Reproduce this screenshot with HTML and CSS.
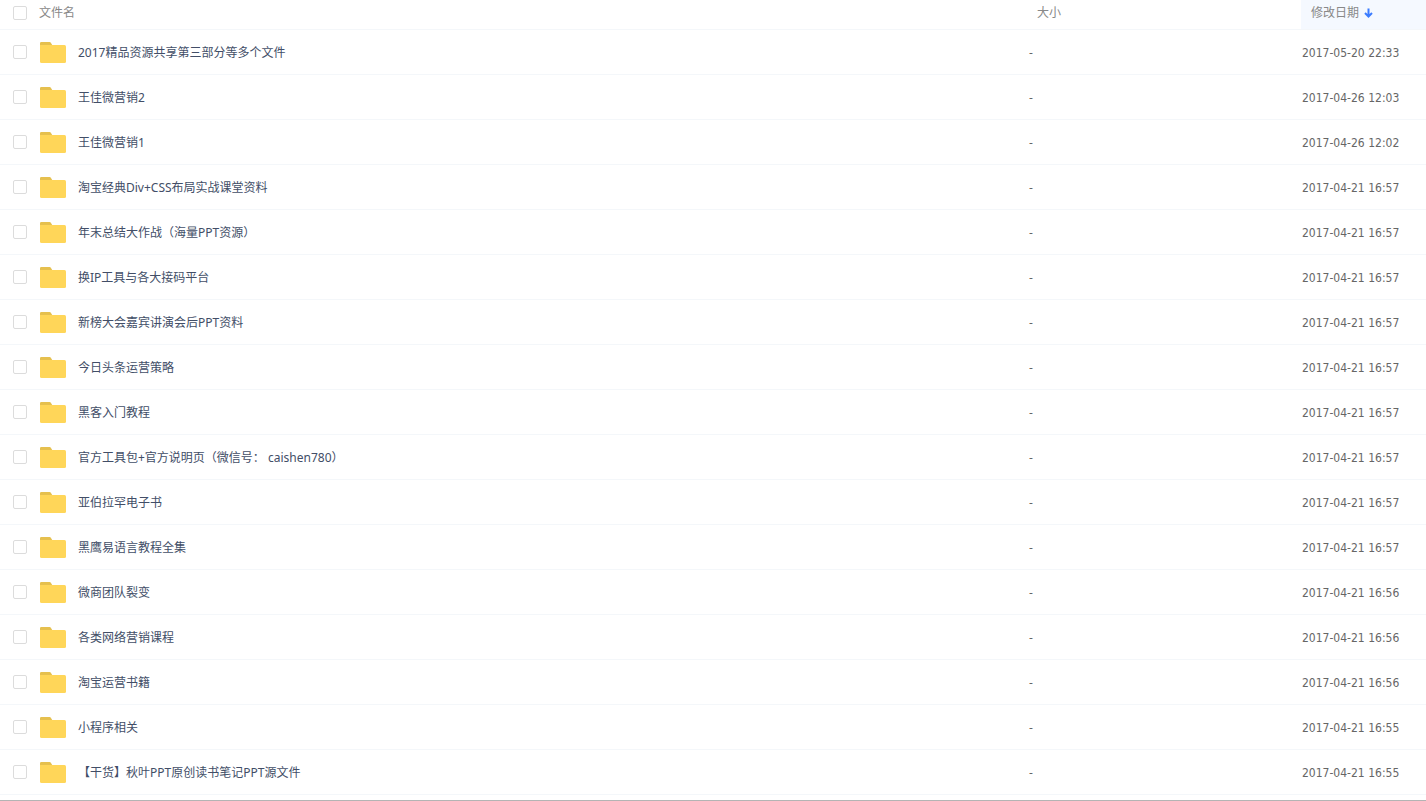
FILE: index.html
```html
<!DOCTYPE html>
<html lang="zh-Hans-CN">
<head>
    <meta charset="UTF-8">
    <title>文件列表</title>
    <link rel="stylesheet" href="styles.css">
</head>
<body>

    <!--文件夹图标-->
    <svg class="sprite" width="0" height="0" aria-hidden="true">
        <symbol id="folder" viewBox="0 0 26 22">
            <path fill="#e6c04e" d="M0 6V1.2Q0 0 1.2 0H9.6Q10.5 0 11 .9L12.5 3.5V6Z"/>
            <path fill="#ffd659" d="M0 3H24.5Q26 3 26 4.5V19.5Q26 21 24.5 21H1.5Q0 21 0 19.5Z"/>
        </symbol>
    </svg>

    <table class="file-list">
        <thead>
            <tr>
                <th class="col-check"><input class="check" type="checkbox" aria-label="全选"></th>
                <th class="col-name">文件名</th>
                <th class="col-size">大小</th>
                <th class="col-date sorted">
                    <button class="sort" type="button">修改日期
                        <svg class="arrow" viewBox="0 0 9 10"><path d="M4.5 0.5V8.5M1 5L4.5 8.5L8 5"/></svg>
                    </button>
                </th>
            </tr>
        </thead>
        <tbody id="list"></tbody>
    </table>

    <script src="script.js"></script>
</body>
</html>
```
FILE: styles.css
```css
/*reset*/
body, table, th, td, input, button {
    margin: 0;
    padding: 0;
}
a {
    text-decoration: none;
}

body {
    background-color: #fff;
    font: 12px/20px "Noto Sans", "Noto Sans CJK SC", sans-serif;
    color: #424e67;
}
.sprite {
    position: absolute;
}

/*文件列表*/
.file-list {
    width: 100%;
    padding-bottom: 5px;
    border-bottom: 1px solid #b4b4b4;
    border-spacing: 0;
    table-layout: fixed;
}
.file-list th, .file-list td {
    box-sizing: border-box;
    border-bottom: 1px solid #f4f7fa;
    text-align: left;
    font-weight: normal;
}
.file-list th {
    height: 30px;
    padding-bottom: 4px;
    color: #888;
}
.file-list td {
    height: 45px;
}
.file-list .col-check {
    width: 39px;
    padding-left: 13px;
}
.file-list .col-size {
    width: 272px;
}
.file-list .col-date {
    width: 125px;
}
.file-list th.col-size {
    padding-left: 8px;
}
.file-list th.sorted {
    padding-left: 10px;
    background-color: #f5f9ff;
}

/*复选框*/
.check {
    display: block;
    box-sizing: border-box;
    width: 14px;
    height: 14px;
    border: 1px solid #dcdcdc;
    border-radius: 2px;
    background-color: #fff;
    appearance: none;
    cursor: pointer;
}
.check:checked {
    border-color: #3b8cff;
    background-color: #3b8cff;
}

/*排序*/
.sort {
    display: flex;
    align-items: center;
    gap: 5px;
    border: 0;
    background: none;
    font: inherit;
    color: inherit;
    cursor: pointer;
}
.sort .arrow {
    width: 9px;
    height: 10px;
    fill: none;
    stroke: #3b7cff;
    stroke-width: 2;
}

/*文件名*/
.file {
    display: flex;
    align-items: center;
    gap: 12px;
    color: #424e67;
    white-space: pre;
}
.file:hover {
    color: #3b8cff;
}
.file .folder {
    width: 26px;
    height: 22px;
}
td.col-name, td.col-size, td.col-date {
    padding-top: 2px;
}
td.col-name, td.col-date {
    padding-left: 1px;
}
td.col-size, td.col-date {
    font-family: "DejaVu Sans Condensed", "DejaVu Sans", sans-serif;
    color: #666;
}
```
FILE: script.js
```js
var files = [
        ['2017精品资源共享第三部分等多个文件', '2017-05-20 22:33'],
        ['王佳微营销2', '2017-04-26 12:03'],
        ['王佳微营销1', '2017-04-26 12:02'],
        ['淘宝经典Div+CSS布局实战课堂资料', '2017-04-21 16:57'],
        ['年末总结大作战（海量PPT资源）', '2017-04-21 16:57'],
        ['换IP工具与各大接码平台', '2017-04-21 16:57'],
        ['新榜大会嘉宾讲演会后PPT资料', '2017-04-21 16:57'],
        ['今日头条运营策略', '2017-04-21 16:57'],
        ['黑客入门教程', '2017-04-21 16:57'],
        ['官方工具包+官方说明页（微信号： caishen780）', '2017-04-21 16:57'],
        ['亚伯拉罕电子书', '2017-04-21 16:57'],
        ['黑鹰易语言教程全集', '2017-04-21 16:57'],
        ['微商团队裂变', '2017-04-21 16:56'],
        ['各类网络营销课程', '2017-04-21 16:56'],
        ['淘宝运营书籍', '2017-04-21 16:56'],
        ['小程序相关', '2017-04-21 16:55'],
        ['【干货】秋叶PPT原创读书笔记PPT源文件', '2017-04-21 16:55']
    ],
    list = document.getElementById('list'),
    html = '';

for(var i = 0; i < files.length; i++) {
    html += '<tr>' +
        '<td class="col-check"><input class="check" type="checkbox" aria-labelledby="file' + i + '"></td>' +
        '<td class="col-name"><a class="file" href="#"><svg class="folder"><use href="#folder"/></svg><span id="file' + i + '">' + files[i][0] + '</span></a></td>' +
        '<td class="col-size">-</td>' +
        '<td class="col-date">' + files[i][1] + '</td>' +
        '</tr>';
}
list.innerHTML = html;

/*全选*/
var checks = document.getElementsByClassName('check');
checks[0].onclick = function () {
    for(var i = 1; i < checks.length; i++) {
        checks[i].checked = this.checked;
    }
}
```
